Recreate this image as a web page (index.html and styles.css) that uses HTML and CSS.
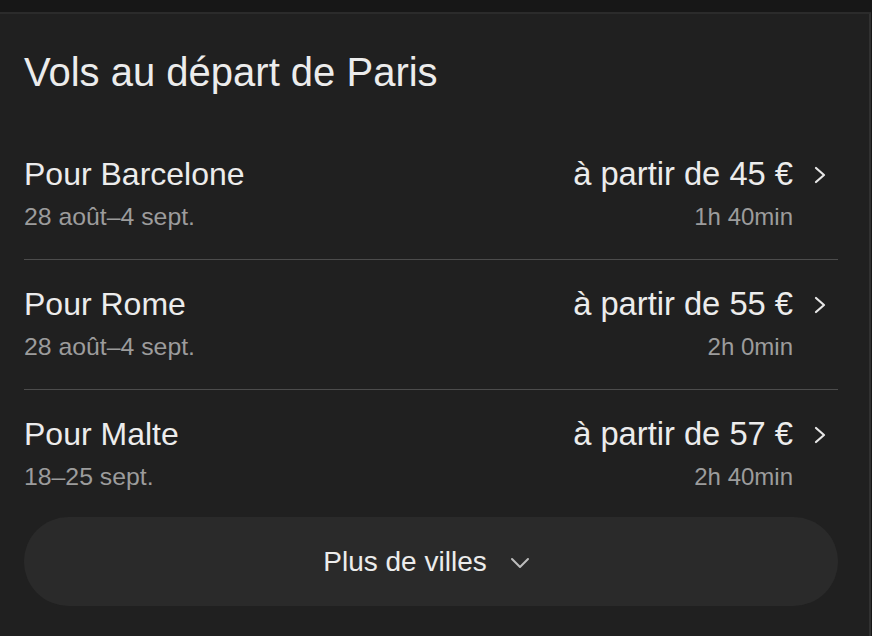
FILE: index.html
```html
<!DOCTYPE html>
<html lang="fr">
<head>
<meta charset="utf-8">
<title>Vols au départ de Paris</title>
<link rel="stylesheet" href="styles.css">
</head>
<body>
<section class="card">
  <h2 class="card-title">Vols au départ de Paris</h2>
  <ul class="flights">
    <li class="flight">
      <div class="flight-main">
        <span class="dest">Pour Barcelone</span>
        <span class="dates">28 août–4 sept.</span>
      </div>
      <div class="flight-info">
        <span class="price">à partir de 45 €</span>
        <span class="duration">1h 40min</span>
      </div>
      <svg class="chev" width="12" height="18" viewBox="0 0 12 18"><polyline points="2,2 10,9 2,16" fill="none" stroke="currentColor" stroke-width="2.2" stroke-linecap="round" stroke-linejoin="round"/></svg>
    </li>
    <li class="flight">
      <div class="flight-main">
        <span class="dest">Pour Rome</span>
        <span class="dates">28 août–4 sept.</span>
      </div>
      <div class="flight-info">
        <span class="price">à partir de 55 €</span>
        <span class="duration">2h 0min</span>
      </div>
      <svg class="chev" width="12" height="18" viewBox="0 0 12 18"><polyline points="2,2 10,9 2,16" fill="none" stroke="currentColor" stroke-width="2.2" stroke-linecap="round" stroke-linejoin="round"/></svg>
    </li>
    <li class="flight">
      <div class="flight-main">
        <span class="dest">Pour Malte</span>
        <span class="dates">18–25 sept.</span>
      </div>
      <div class="flight-info">
        <span class="price">à partir de 57 €</span>
        <span class="duration">2h 40min</span>
      </div>
      <svg class="chev" width="12" height="18" viewBox="0 0 12 18"><polyline points="2,2 10,9 2,16" fill="none" stroke="currentColor" stroke-width="2.2" stroke-linecap="round" stroke-linejoin="round"/></svg>
    </li>
  </ul>
  <button class="more" type="button">
    <span>Plus de villes</span>
    <svg class="down" width="20" height="12" viewBox="0 0 20 12"><polyline points="2,2 10,10 18,2" fill="none" stroke="currentColor" stroke-width="2" stroke-linecap="round" stroke-linejoin="round"/></svg>
  </button>
</section>
</body>
</html>
```

FILE: styles.css
```css
html, body {
  margin: 0;
  padding: 0;
  background: #171717;
  height: 100%;
  overflow: hidden;
}

body {
  font-family: "Liberation Sans", Arial, Helvetica, sans-serif;
  color: #ececec;
}

.card {
  box-sizing: border-box;
  height: calc(100vh - 12px);
  margin-top: 12px;
  margin-right: 1px;
  border-top: 2px solid #2b2b2b;
  border-right: 2px solid #313131;
  background: #202020;
  padding: 0 31px 0 24px;
}

.card-title {
  margin: 0;
  padding-top: 34px;
  font-size: 40px;
  line-height: 48px;
  font-weight: 400;
  color: #ececec;
}

.flights {
  list-style: none;
  margin: 34px 0 0;
  padding: 0;
}

.flight {
  display: grid;
  grid-template-columns: 1fr auto 45px;
  align-items: start;
  padding: 25px 0 27px;
  border-bottom: 1px solid #4c4c4c;
}

.flight:last-child {
  border-bottom: none;
  padding-bottom: 25px;
}

.flight-main,
.flight-info {
  display: flex;
  flex-direction: column;
  gap: 9px;
}

.flight-info {
  align-items: flex-end;
}

.dest,
.price {
  font-size: 32px;
  line-height: 38px;
  color: #ececec;
}

.price {
  font-size: 32.7px;
}

.dates,
.duration {
  font-size: 24px;
  line-height: 30px;
  color: #9c9c9c;
}

.dates {
  font-size: 24.8px;
}

.chev {
  margin: 11px 0 0 21px;
  color: #e6e6e6;
}

.more {
  display: flex;
  align-items: center;
  justify-content: center;
  gap: 23px;
  width: 100%;
  height: 89px;
  border: none;
  border-radius: 45px;
  background: #2a2a2a;
  color: #ececec;
  font-family: inherit;
  font-size: 28px;
  padding: 0 9px 0 0;
}

.more span {
  line-height: 34px;
}

.down {
  color: #bdbdbd;
  margin-top: 2px;
}
```
